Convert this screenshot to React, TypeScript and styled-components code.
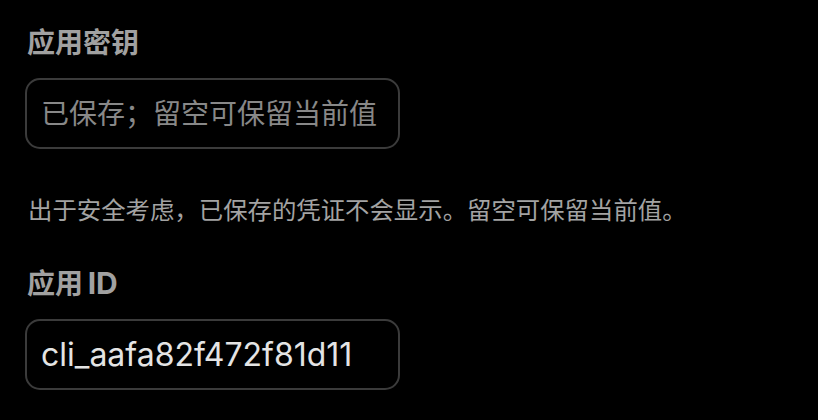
import React from 'react';
import styled, { createGlobalStyle } from 'styled-components';

const GlobalStyle = createGlobalStyle`
	html, body {
		margin: 0;
		padding: 0;
		background: #000;
	}

	body {
		font-family: 'Inter', 'Noto Sans CJK SC', sans-serif;
	}
`;

const Form = styled.div`
	display: flex;
	flex-direction: column;
	padding: 23px 25px 0;
	width: 818px;
	height: 420px;
	box-sizing: border-box;
	background: #000;
`;

const Field = styled.div<{ $gap?: number }>`
	display: flex;
	flex-direction: column;
	gap: 15px;
	margin-top: ${(p) => p.$gap ?? 0}px;
`;

const Label = styled.label`
	color: #a1a1a1;
	font-size: 28px;
	font-weight: 700;
	line-height: 40px;
	padding-left: 2px;
`;

// latin part of a label renders a touch wider in the original
const Latin = styled.span`
	font-size: 30px;
	margin-left: -2px;
`;

const Input = styled.input<{ $size?: number }>`
	box-sizing: border-box;
	width: 375px;
	height: 71px;
	padding: 0 14px;
	border: 2px solid #3b3b3b;
	border-radius: 15px;
	background: #000;
	color: #e4e4e4;
	font-family: inherit;
	font-size: ${(p) => p.$size ?? 28}px;
	outline: none;

	&::placeholder {
		color: #888;
	}
`;

const Hint = styled.p`
	margin: 43px 0 0;
	color: #a3a3a3;
	font-size: 24.4px;
	line-height: 36px;
	padding-left: 3px;
`;

const App = () => {
	return (
		<>
			<GlobalStyle />
			<Form>
				<Field>
					<Label>应用密钥</Label>
					<Input type='text' placeholder='已保存；留空可保留当前值' />
				</Field>
				<Hint>出于安全考虑，已保存的凭证不会显示。留空可保留当前值。</Hint>
				<Field $gap={35}>
					<Label>
						应用 <Latin>ID</Latin>
					</Label>
					<Input type='text' $size={32} defaultValue='cli_aafa82f472f81d11' readOnly />
				</Field>
			</Form>
		</>
	);
};

export default App;
